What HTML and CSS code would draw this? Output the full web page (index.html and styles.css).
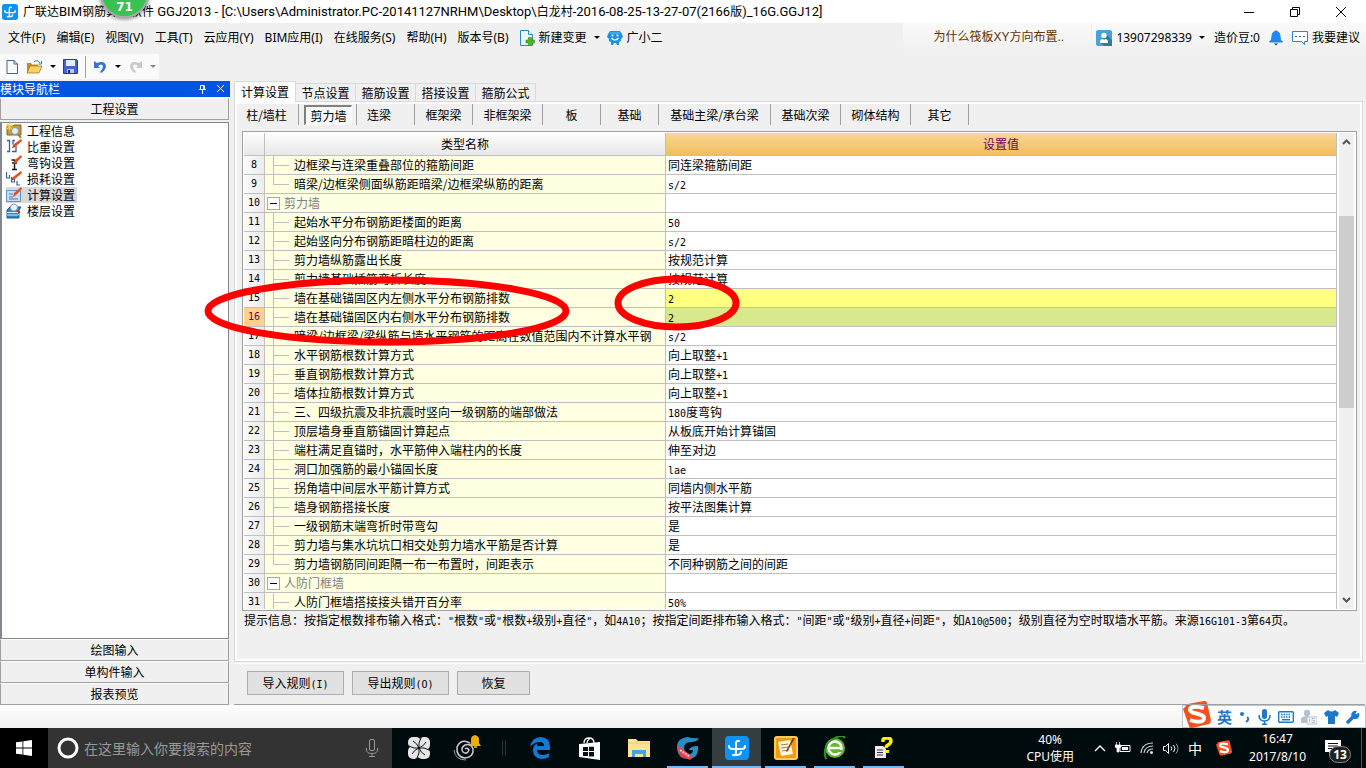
FILE: index.html
```html
<!DOCTYPE html>
<html lang="zh-CN">
<head>
<meta charset="utf-8">
<title>广联达BIM钢筋算量软件 GGJ2013</title>
<link rel="stylesheet" href="styles.css">
</head>
<body>
<header class="titlebar">
  <svg class="app-logo" width="16" height="16" viewBox="0 0 24 24"><rect width="24" height="24" rx="4" fill="#0c93f5"/><path d="M14 5q-3-1-3 3v8q0 4-3 3M4 10q0 3 4 3h9q3 0 3-3M11 19q5 0 5-3" fill="none" stroke="#fff" stroke-width="2" stroke-linecap="round"/></svg>
  <h1>广联达<span>BIM</span>钢筋算量软件<span> GGJ2013 - [C:\Users\Administrator.PC-20141127NRHM\Desktop\</span>白龙村<span>-2016-08-25-13-27-07(2166</span>版<span>)_16G.GGJ12]</span></h1>
  <div class="win-buttons">
    <button aria-label="最小化"><svg width="12" height="12"><path d="M1 6.5h10" stroke="#000"/></svg></button>
    <button aria-label="还原"><svg width="12" height="12" fill="none" stroke="#000"><path d="M1.500 3.500h7v7h-7zM3.500 3.500v-2h7v7h-2"/></svg></button>
    <button aria-label="关闭"><svg width="12" height="12"><path d="M1 1l10 10M11 1L1 11" stroke="#000"/></svg></button>
  </div>
  <div class="score">71</div>
</header>

<nav class="menubar">
  <button>文件(F)</button><button>编辑(E)</button><button>视图(V)</button><button>工具(T)</button><button>云应用(Y)</button><button>BIM应用(I)</button><button>在线服务(S)</button><button>帮助(H)</button><button>版本号(B)</button>
  <button class="with-icon"><svg width="15" height="16" viewBox="0 0 15 16"><path d="M.5.5h8l4 4v11H.5z" fill="#eaf6fd" stroke="#3287bd"/><path d="M8.500.5v4h4" fill="#fff" stroke="#3287bd"/><path d="M8.500 7.500h3v2.500h3v3h-3v3h-3v-3H6v-3h2.500z" fill="#57b51b" stroke="#378a0b" stroke-width=".6"/></svg>新建变更<i class="caret"></i></button>
  <button class="with-icon helper"><svg width="16" height="16" viewBox="0 0 16 16"><path d="M3 1h10l2 3 1 3-2 2v2l-2 1v3h-2l-1-2H7l-1 2H4v-3l-2-1V9L0 7l1-3z" fill="#1c92dc"/><path d="M3 2h10v2H3z" fill="#3cabee"/><path d="M4.500 8q3.500 4 7 0" fill="none" stroke="#fff" stroke-width="1.200"/><circle cx="5.500" cy="5.500" r="1" fill="#fff"/><circle cx="10.500" cy="5.500" r="1" fill="#fff"/></svg>广小二</button>
  <div class="notice"><a href="#">为什么筏板XY方向布置..</a></div>
  <div class="account">
    <button class="with-icon"><svg width="16" height="16" viewBox="0 0 16 16"><rect width="16" height="16" rx="2" fill="#4aa3d4"/><path d="M10 4l6 6v6H8l-4-4z" fill="#32789f"/><circle cx="8" cy="5.500" r="2.700" fill="#fff"/><path d="M4 12q0-3 3-3l1 1 1-1q3 0 3 3v1H4z" fill="#fff"/></svg>13907298339<i class="caret"></i></button>
    <span>造价豆:0</span>
    <button class="with-icon" aria-label="消息"><svg width="14" height="16" viewBox="0 0 14 16"><path d="M7 0v2M7 1.500C3.500 1.500 3 4 3 7q0 3-2.500 5h13Q11 10 11 7c0-3-.5-5.500-4-5.500z" fill="#1e88ee" stroke="#1e88ee"/><path d="M5 13.500h4L7 15.500z" fill="#103a6c"/></svg></button>
    <button class="with-icon"><svg width="16" height="16" viewBox="0 0 16 16"><path d="M.5 1.500h15v10h-3v3l-3-3h-9z" fill="#fff" stroke="#2b83dd"/><path d="M3 6.500h2m2 0h2m2 0h2" stroke="#2b5f9d"/></svg>我要建议</button>
  </div>
</nav>

<div class="toolbar"><div class="tools">
  <button aria-label="新建"><svg width="13" height="16" viewBox="0 0 13 16"><path d="M1 1.500h7l3.500 3.500v9.500H1z" fill="#f6fafe" stroke="#476488"/><path d="M8 1.500V5h3.500" fill="none" stroke="#476488"/></svg></button>
  <button aria-label="打开"><svg width="17" height="16" viewBox="0 0 17 16"><path d="M1 14V4h4l1 1.500h6V14z" fill="#c98b20"/><path d="M1 14l3-7h12l-3 7z" fill="#f8d168" stroke="#a36b14" stroke-width=".7"/><path d="M8 3q4-3 6 1m1.500-2v3h-3" fill="none" stroke="#3d72a6"/></svg></button>
  <i class="caret"></i>
  <button aria-label="保存"><svg width="15" height="15" viewBox="0 0 15 15"><path d="M.5.5h13l1 1v13H.5z" fill="#4663cf" stroke="#273b91"/><path d="M3 1h9v6H3z" fill="#e5edfb"/><path d="M4 10h7v4H4z" fill="#bac8ee"/><path d="M5 11h2v3H5z" fill="#1b2770"/></svg></button>
  <span class="divider"></span>
  <button aria-label="撤销"><svg width="15" height="14" viewBox="0 0 15 14"><path d="M1 1v7h6L5 6q4-3 5 0 0 3-3 6l1 1q5-3 5-7-1-6-9-3z" fill="#3673d3"/></svg></button>
  <i class="caret"></i>
  <button aria-label="重做" disabled><svg width="15" height="14" viewBox="0 0 15 14"><path d="M14 1v7H8l2-2Q6 3 5 6q0 3 3 6l-1 1q-5-3-5-7 1-6 9-3z" fill="#c9c9c9"/></svg></button>
  <i class="caret dim"></i>
</div></div>

<div class="workspace">
  <aside class="side">
    <div class="side-title"><span>模块导航栏</span>
      <button aria-label="固定"><svg width="9" height="10" fill="none" stroke="#fff"><path d="M2.500 5.500v-4h4v4M5.500 1v5M1 5.500h7M4.500 6v4"/></svg></button>
      <button aria-label="关闭"><svg width="9" height="10"><path d="M1 1l7 7M8 1L1 8" stroke="#fff"/></svg></button></div>
    <button class="group">工程设置</button>
    <ul class="modules">
      <li><a href="#"><svg width="16" height="16" viewBox="0 0 16 16"><path d="M1 3h6l1-1h7v10H1z" fill="#c29a45" stroke="#8a651a"/><path d="M0 3h7M3.500 0v7M1 1l5 5M6 1L1 6" stroke="#ffd429" stroke-width="1.200"/><circle cx="9" cy="8" r="3.500" fill="#e3f0fc" stroke="#7e9bbd"/><path d="M12 11l3 4" stroke="#a0742a" stroke-width="2"/></svg>工程信息</a></li>
      <li><a href="#"><svg width="16" height="16" viewBox="0 0 16 16"><path d="M1 1.500h2.500v11H1M9 1.500H7v4M6 12.500h4v-6" fill="none" stroke="#34619c" stroke-width="1.300"/><path d="M6 9l2-4 7-5 1 2-7 6z" fill="#ec4c22"/><path d="M6 9l2-4 1 3z" fill="#8a5a40"/></svg>比重设置</a></li>
      <li><a href="#"><svg width="16" height="16" viewBox="0 0 16 16"><path d="M5.500 5h3v10M6 8h5M6 14.500h5" fill="none" stroke="#1c1c1c" stroke-width="1.500"/><path d="M7 9l2-4 6-5 1 2-6 6z" fill="#ec4c22"/></svg>弯钩设置</a></li>
      <li><a href="#"><svg width="16" height="16" viewBox="0 0 16 16"><path d="M.5 1v6h3V4M5.500 6v5h3V8M11 10v4h3" fill="none" stroke="#34619c" stroke-width="1.200"/><path d="M5 10l2-4 8-6 1 2-7 6z" fill="#ec4c22"/><path d="M5 10l2-4 1 2z" fill="#8a5a40"/></svg>损耗设置</a></li>
      <li><a href="#" class="active"><svg width="16" height="16" viewBox="0 0 16 16"><path d="M.5 3.500h14v11H.5z" fill="#c8def8" stroke="#5f93ce"/><path d="M3 7h4m-4 3h4m-4 2h9" stroke="#5278a8"/><path d="M7 10l1-4 7-6 1 2-7 7z" fill="#ec4c22"/></svg>计算设置</a></li>
      <li><a href="#"><svg width="16" height="16" viewBox="0 0 16 16"><path d="M1 7l3-3h11l-2 3v8H1z" fill="#2e86ca" stroke="#135b99"/><path d="M1 9.500h11l2-2M1 12h11l2-2" stroke="#d6edfc" fill="none"/><circle cx="8" cy="4.500" r="3.500" fill="#e7f2fb" stroke="#8ea3b8"/><path d="M11 7l3 3" stroke="#7a5430" stroke-width="2"/></svg>楼层设置</a></li>
    </ul>
    <button class="group">绘图输入</button>
    <button class="group">单构件输入</button>
    <button class="group">报表预览</button>
  </aside>

  <main class="content">
    <div class="tabs" role="tablist">
      <button role="tab" class="current">计算设置</button><button role="tab">节点设置</button><button role="tab">箍筋设置</button><button role="tab">搭接设置</button><button role="tab">箍筋公式</button>
    </div>
    <section class="page">
      <div class="kinds">
        <button>柱/墙柱</button><button class="pressed"><span>剪力墙</span></button><button class="near">连梁</button><button>框架梁</button><button class="wide">非框架梁</button><button>板</button><button>基础</button><button class="widest">基础主梁/承台梁</button><button class="wide">基础次梁</button><button class="wide">砌体结构</button><button>其它</button>
      </div>
      <div class="grid-box">
        <div class="grid-view">
        <table class="grid">
          <colgroup><col class="c-num"><col class="c-name"><col></colgroup>
          <thead><tr><th></th><th>类型名称</th><th class="chosen">设置值</th></tr></thead>
          <tbody>
            <tr><th>8</th><td><div class="node"><i class="twig"></i>边框梁与连梁重叠部位的箍筋间距</div></td><td>同连梁箍筋间距</td></tr>
            <tr><th>9</th><td><div class="node"><i class="twig end"></i>暗梁/边框梁侧面纵筋距暗梁/边框梁纵筋的距离</div></td><td><span class="m">s/2</span></td></tr>
            <tr><th>10</th><td><div class="node parent"><button aria-label="折叠"></button>剪力墙</div></td><td></td></tr>
            <tr><th>11</th><td><div class="node"><i class="twig"></i>起始水平分布钢筋距楼面的距离</div></td><td><span class="m">50</span></td></tr>
            <tr><th>12</th><td><div class="node"><i class="twig"></i>起始竖向分布钢筋距暗柱边的距离</div></td><td><span class="m">s/2</span></td></tr>
            <tr><th>13</th><td><div class="node"><i class="twig"></i>剪力墙纵筋露出长度</div></td><td>按规范计算</td></tr>
            <tr><th>14</th><td><div class="node"><i class="twig"></i>剪力墙基础插筋弯折长度</div></td><td>按规范计算</td></tr>
            <tr><th>15</th><td><div class="node"><i class="twig"></i>墙在基础锚固区内左侧水平分布钢筋排数</div></td><td class="changed"><span class="m">2</span></td></tr>
            <tr><th class="chosen">16</th><td><div class="node"><i class="twig"></i>墙在基础锚固区内右侧水平分布钢筋排数</div></td><td class="focus"><span class="m">2</span></td></tr>
            <tr><th>17</th><td><div class="node"><i class="twig"></i>暗梁/边框梁/梁纵筋与墙水平钢筋的距离在数值范围内不计算水平钢</div></td><td><span class="m">s/2</span></td></tr>
            <tr><th>18</th><td><div class="node"><i class="twig"></i>水平钢筋根数计算方式</div></td><td>向上取整<span class="m">+1</span></td></tr>
            <tr><th>19</th><td><div class="node"><i class="twig"></i>垂直钢筋根数计算方式</div></td><td>向上取整<span class="m">+1</span></td></tr>
            <tr><th>20</th><td><div class="node"><i class="twig"></i>墙体拉筋根数计算方式</div></td><td>向上取整<span class="m">+1</span></td></tr>
            <tr><th>21</th><td><div class="node"><i class="twig"></i>三、四级抗震及非抗震时竖向一级钢筋的端部做法</div></td><td><span class="m">180</span>度弯钩</td></tr>
            <tr><th>22</th><td><div class="node"><i class="twig"></i>顶层墙身垂直筋锚固计算起点</div></td><td>从板底开始计算锚固</td></tr>
            <tr><th>23</th><td><div class="node"><i class="twig"></i>端柱满足直锚时，水平筋伸入端柱内的长度</div></td><td>伸至对边</td></tr>
            <tr><th>24</th><td><div class="node"><i class="twig"></i>洞口加强筋的最小锚固长度</div></td><td><span class="m">lae</span></td></tr>
            <tr><th>25</th><td><div class="node"><i class="twig"></i>拐角墙中间层水平筋计算方式</div></td><td>同墙内侧水平筋</td></tr>
            <tr><th>26</th><td><div class="node"><i class="twig"></i>墙身钢筋搭接长度</div></td><td>按平法图集计算</td></tr>
            <tr><th>27</th><td><div class="node"><i class="twig"></i>一级钢筋末端弯折时带弯勾</div></td><td>是</td></tr>
            <tr><th>28</th><td><div class="node"><i class="twig"></i>剪力墙与集水坑坑口相交处剪力墙水平筋是否计算</div></td><td>是</td></tr>
            <tr><th>29</th><td><div class="node"><i class="twig end"></i>剪力墙钢筋同间距隔一布一布置时，间距表示</div></td><td>不同种钢筋之间的间距</td></tr>
            <tr><th>30</th><td><div class="node parent"><button aria-label="折叠"></button>人防门框墙</div></td><td></td></tr>
            <tr><th>31</th><td><div class="node"><i class="twig"></i>人防门框墙搭接接头错开百分率</div></td><td><span class="m">50%</span></td></tr>
          </tbody>
        </table>
        </div>
        <div class="scroll">
          <button aria-label="向上"><svg width="9" height="6"><path d="M1 5l3.500-3.500L8 5" fill="none" stroke="#555" stroke-width="2"/></svg></button>
          <div class="before"></div><div class="thumb"></div><div class="after"></div>
          <button aria-label="向下"><svg width="9" height="6"><path d="M1 1l3.500 3.500L8 1" fill="none" stroke="#555" stroke-width="2"/></svg></button>
        </div>
      </div>
      <p class="hint">提示信息：按指定根数排布输入格式：<span class="m">"</span>根数<span class="m">"</span>或<span class="m">"</span>根数<span class="m">+</span>级别<span class="m">+</span>直径<span class="m">"</span>，如<span class="m">4A10</span>；按指定间距排布输入格式：<span class="m">"</span>间距<span class="m">"</span>或<span class="m">"</span>级别<span class="m">+</span>直径<span class="m">+</span>间距<span class="m">"</span>，如<span class="m">A10@500</span>；级别直径为空时取墙水平筋。来源<span class="m">16G101-3</span>第<span class="m">64</span>页。</p>
    </section>
    <footer class="actions">
      <button>导入规则<span class="m">(I)</span></button><button>导出规则<span class="m">(O)</span></button><button class="short">恢复</button>
    </footer>
  </main>
  <svg class="marks" width="760" height="360"><g fill="none" stroke="#f00" stroke-width="7"><ellipse cx="387" cy="230" rx="179" ry="31"/><ellipse cx="677" cy="222" rx="59" ry="24"/></g></svg>
</div>

<div class="status">
  <div class="ime">
    <svg class="sogou" width="28" height="27" viewBox="0 0 28 27"><path d="M3 5Q2 3 5 3l16-3q3 0 3 2l4 17q0 3-2 4L9 27q-3 0-3-2L0 8z" fill="#f4511e"/><path d="M21 7Q7 4 7 9c0 4 14 3 14 8s-9 4-14 2" fill="none" stroke="#fff" stroke-width="4"/></svg>
    <b>英</b>
    <svg width="12" height="16" viewBox="0 0 12 16"><circle cx="3" cy="5" r="2" fill="#1c78c8"/><path d="M8 8q3 2-1 5" fill="none" stroke="#1c78c8" stroke-width="2"/></svg>
    <svg width="13" height="16" viewBox="0 0 13 16"><rect x="4" y="0" width="5" height="10" rx="2.500" fill="#1c78c8"/><path d="M1 6q0 6 5.500 6T12 6M6.500 12v4M4 15.200h5" fill="none" stroke="#1c78c8" stroke-width="1.500"/></svg>
    <svg width="16" height="12" viewBox="0 0 16 12"><rect x=".7" y=".7" width="14.600" height="10.600" rx="1" fill="#fff" stroke="#1c78c8" stroke-width="1.400"/><path d="M3 3.500h10M3 6h10" stroke="#1c78c8" stroke-width="1.500" stroke-dasharray="1.500 1"/><path d="M4 8.700h8" stroke="#1c78c8" stroke-width="1.500"/></svg>
    <svg width="16" height="16" viewBox="0 0 16 16"><circle cx="6" cy="4" r="3.200" fill="#b5c0d0"/><path d="M0 14V9q6-4 11 0v5z" fill="#b5c0d0"/><rect x="6" y="8" width="10" height="7" fill="#fff" stroke="#b5c0d0"/><path d="M8.500 9.500v4m5.500-4h-3v4h3v-2h-2" fill="none" stroke="#b5c0d0"/></svg>
    <svg width="15" height="14" viewBox="0 0 15 14"><path d="M4 0q3.500 3 7 0l4 3-2 4-2-1v8H4V6L2 7 0 3z" fill="#1c78c8"/></svg>
    <svg width="14" height="14" viewBox="0 0 14 14"><path d="M2 12l6-6" stroke="#1c78c8" stroke-width="3.500" stroke-linecap="round"/><path d="M12.500 3.500A3.500 3.500 0 1 1 10 1.500L8.800 3.800l1.500 1.500z" fill="#1c78c8" stroke="#1c78c8" stroke-width="1.200"/></svg>
  </div>
</div>

<div class="taskbar">
  <button class="start" aria-label="开始"><svg width="16" height="16" viewBox="0 0 16 16" fill="#fff"><path d="M0 2.300L6.500 1.400v6.200H0zM7.300 1.300L16 0v7.600H7.300zM0 8.400h6.500v6.200L0 13.700zM7.300 8.400H16V16l-8.700-1.300z"/></svg></button>
  <label class="search"><svg width="22" height="22"><circle cx="11" cy="11" r="9" fill="none" stroke="#fff" stroke-width="3"/></svg><input type="text" aria-label="搜索" placeholder="在这里输入你要搜索的内容"><svg width="12" height="18" viewBox="0 0 12 18" fill="none" stroke="#999"><rect x="3.500" y=".5" width="5" height="11" rx="1.500"/><path d="M.5 9v2q0 3.500 5.500 3.500t5.500-3.500V9M6 14.500v3M3 17.500h6"/></svg></label>
  <div class="apps">
    <button aria-label="应用"><svg width="22" height="22" viewBox="0 0 22 22"><rect x="0" y="0" width="13" height="11" rx="5" fill="#e6e6e6"/><rect x="11" y="0" width="11" height="13" rx="5" fill="#e6e6e6"/><rect x="9" y="11" width="13" height="11" rx="5" fill="#e6e6e6"/><rect x="0" y="9" width="11" height="13" rx="5" fill="#e6e6e6"/><path d="M11 11Q6 12 1 9M11 11q-1-5 2-10M11 11q5-1 10 2M11 11q1 5-2 10M11 11Q9 6 5 4M11 11q5-2 7-6M11 11q2 5 6 7M11 11q-5 2-7 6" fill="none" stroke="#101416"/></svg></button>
    <button aria-label="提醒"><svg width="30" height="28" viewBox="0 0 30 28"><path d="M17 9Q8 4 4 13q-1 10 8 11 9-1 8-9-2-6-8-4-5 3-2 7 4 3 6-2-2-3-4-1" fill="none" stroke="#ccc" stroke-width="1.500"/><path d="M1 16q1 10 12 10" fill="none" stroke="#999"/><path d="M16 12l2-3V5q0-3 4-4 4 1 4 4v4l2 3z" fill="#eaae08"/><path d="M21 12h3v2h-3z" fill="#d29300"/></svg></button>
    <span class="split"></span>
    <button aria-label="Edge"><svg width="21" height="22" viewBox="0 0 21 22"><path d="M0 10Q2 0 11 0q9 1 9 9v4H7q0 5 6 5 4 0 6-2v4q-3 2-8 2-8-1-8-9 0-5 5-7-1 1-1 3h7q0-4-4-4-6 0-10 5z" fill="#0f7ad8"/></svg></button>
    <button aria-label="应用商店"><svg width="22" height="23" viewBox="0 0 22 23"><path d="M0 7l21-2v18L0 20z" fill="#fff"/><path d="M5 6q0-5 5-5 5 0 5 5M8 6q0-3 4-5" fill="none" stroke="#fff" stroke-width="1.300"/><path d="M4 10h5v4H4zM10 9.700h5V14h-5zM4 15h5v4H4zM10 15h5v4.500h-5z" fill="#06101a"/></svg></button>
    <button aria-label="文件资源管理器"><svg width="22" height="19" viewBox="0 0 22 19"><path d="M0 0h8l2 2h12v16H0z" fill="#ffe394"/><path d="M0 4h22" stroke="#efc862"/><path d="M4 18v-7h14v7h-3v-3H7v3z" fill="#3aa9df"/></svg></button>
    <button class="open" aria-label="广联达G"><svg width="24" height="24" viewBox="0 0 24 24"><path d="M1 13Q0 2 12 1q5 2 11 1-2 4-8 4-7 0-7 6 1 6 6 6 3-1 3-4h-4q1-4 9-4 1 12-9 13Q2 23 1 13z" fill="#278fc5"/><path d="M1 9l16 12-3 3-10-4z" fill="#ef3c4a"/><path d="M4 14l10 7" stroke="#ffd0d4" stroke-width="2" stroke-dasharray="2 1"/></svg></button>
    <button class="open front" aria-label="GGJ2013"><svg width="24" height="24" viewBox="0 0 24 24"><rect width="24" height="24" rx="4" fill="#0c93f5"/><path d="M14 5q-3-1-3 3v8q0 4-3 3M4 10q0 3 4 3h9q3 0 3-3M11 19q5 0 5-3" fill="none" stroke="#fff" stroke-width="2" stroke-linecap="round"/></svg></button>
    <button class="open" aria-label="写字板"><svg width="24" height="24" viewBox="0 0 24 24"><rect x="1" y="1" width="22" height="22" rx="2" fill="#f39a13" stroke="#ffcb55" stroke-width="2"/><path d="M4 6l12-2 3 14-12 2z" fill="#fff7df"/><path d="M7 9l7-1M7 12l8-1M8 15l7-1" stroke="#9f7d54"/><path d="M21 2l-8 14-1-1L19 2z" fill="#7c3a0c"/></svg></button>
    <button class="open" aria-label="浏览器"><svg width="24" height="24" viewBox="0 0 24 24"><circle cx="12" cy="12" r="10" fill="#61b82b"/><path d="M3 23Q-1 11 9 4t13-2" fill="none" stroke="#2b941e" stroke-width="2"/><circle cx="12" cy="12" r="6.500" fill="none" stroke="#fff" stroke-width="2.500"/><path d="M7 12h12" stroke="#fff" stroke-width="2.500"/><path d="M14 15h6" stroke="#61b82b" stroke-width="2"/></svg></button>
    <button class="open" aria-label="帮助"><svg width="20" height="22" viewBox="0 0 20 22"><path d="M1 9h8l3 3v9H1z" fill="#eee"/><path d="M3 13h6M3 15.500h6M3 18h6" stroke="#333"/><path d="M9 5V3q0-2 4-2t4 3q0 2-3 4-2 1-2 3" fill="none" stroke="#ffee00" stroke-width="3.500"/><path d="M11 13h4v3h-4z" fill="#ffee00"/></svg></button>
  </div>
  <div class="tray">
    <div class="cpu">40%<br>CPU使用</div>
    <svg width="12" height="8"><path d="M1 7l5-5 5 5" fill="none" stroke="#fff" stroke-width="1.300"/></svg>
    <svg width="16" height="12" viewBox="0 0 16 12"><path d="M5 3.500h10v6H5z" fill="none" stroke="#fff"/><path d="M7 5h6v3H7z" fill="#fff"/><path d="M1.500 0v3M4.500 0v3M0 3h6v2L4 6v4H2V6L0 5z" fill="#fff" stroke="#fff" stroke-width=".7"/></svg>
    <svg width="14" height="14" viewBox="0 0 14 14" fill="none" stroke="#ccc" stroke-width="1.200"><path d="M1 12Q2 2 13 2M4 12q1-7 9-7M7 12q1-4 6-4"/><circle cx="11.500" cy="11.500" r="1" fill="#fff"/></svg>
    <svg width="16" height="13" viewBox="0 0 16 13" fill="none" stroke="#fff"><path d="M.5 4.500h2l3-3v10l-3-3h-2zM8 4.500q1.500 2 0 4M10.500 3q3 3.500 0 7"/><path d="M13 1.500q4 5 0 10" stroke="#999"/></svg>
    <span class="lang">中</span>
    <svg width="16" height="16" viewBox="0 0 28 27"><path d="M3 5Q2 3 5 3l16-3q3 0 3 2l4 17q0 3-2 4L9 27q-3 0-3-2L0 8z" fill="#f4511e"/><path d="M21 7Q7 4 7 9c0 4 14 3 14 8s-9 4-14 2" fill="none" stroke="#fff" stroke-width="4"/></svg>
    <div class="clock">16:47<br>2017/8/10</div>
    <button class="notes" aria-label="通知"><svg width="17" height="16" viewBox="0 0 17 16"><path d="M0 0h16v12H8l-4 4v-4H0z" fill="#fff"/><path d="M3 3.500h10M3 6h10M3 8.500h6" stroke="#111"/></svg><span>13</span></button>
  </div>
</div>
</body>
</html>
```
FILE: styles.css
```css
* { box-sizing: border-box; }
body { margin: 0; height: 100vh; display: flex; flex-direction: column; overflow: hidden; background: #f0f0f0; color: #000; font: 12px/18px "Noto Sans CJK SC", sans-serif; }
button { margin: 0; padding: 0; border: 0; background: none; color: inherit; font: inherit; white-space: nowrap; }
a { color: inherit; text-decoration: none; }
svg { display: block; flex: none; }
.m { font-family: "DejaVu Sans Mono", monospace; font-size: 10px; line-height: 1; }
.caret { width: 0; height: 0; border: 3px solid transparent; border-top-color: #000; border-bottom: 0; }
.dim { border-top-color: #888; }

.titlebar { position: relative; flex: none; height: 23px; display: flex; align-items: center; padding-left: 2px; background: #fff; }
.titlebar h1 { flex: 1; margin: 0 0 0 5px; font: 12px/22px "Noto Sans CJK SC", sans-serif; white-space: nowrap; }
.titlebar h1 span { font-family: Roboto, sans-serif; font-size: 13px; }
.win-buttons { display: flex; margin-right: 2px; }
.win-buttons button { width: 46px; display: flex; justify-content: center; }
.score { position: absolute; left: 100px; top: -31px; width: 49px; height: 49px; border: 2px solid #a5adb0; border-radius: 50%; background: #39c151; box-shadow: 0 1px 5px #0008; color: #fff; font: bold 12px/22px "DejaVu Sans", sans-serif; text-align: center; padding-top: 25px; z-index: 2; }

.menubar { flex: none; height: 29px; display: flex; align-items: center; gap: 11px; padding-left: 8px; font-family: "Noto Sans", "Noto Sans CJK SC", sans-serif; white-space: nowrap; }
.with-icon { display: flex; align-items: center; gap: 4px; }
.with-icon .caret { margin-left: 3px; }
.helper { margin-left: -4px; }
.notice { margin-left: auto; width: 188px; height: 29px; line-height: 29px; padding-left: 30px; background: linear-gradient(#fafafa, #f0f0f0); color: #643200; font-family: "Liberation Sans", "Noto Sans CJK SC", sans-serif; }
.account { display: flex; align-items: center; gap: 9px; height: 29px; margin-left: -10px; padding: 0 6px 0 4px; background: linear-gradient(#fafafa, #f0f0f0); }

.toolbar { flex: none; height: 29px; padding: 2px 0; }
.tools { width: 159px; height: 25px; display: flex; align-items: center; gap: 7px; padding-left: 6px; background: #fafafa; }
.divider { width: 1px; height: 22px; background: #a0a0a0; }

.workspace { position: relative; flex: 1; min-height: 0; display: flex; gap: 4px; }
.marks { position: absolute; left: 0; top: 0; pointer-events: none; }
.side { flex: none; width: 230px; display: flex; flex-direction: column; }
.side-title { height: 16px; display: flex; align-items: center; gap: 9px; padding-right: 5px; margin-bottom: 1px; background: #0054e3; color: #fff; line-height: 14px; }
.side-title span { flex: 1; }
.group { height: 22px; margin-right: 1px; border: 1px solid #a0a0a0; border-top-color: #fff; line-height: 20px; }
.modules { flex: 1; margin: 2px 1px 0 0; padding: 0 0 0 4px; border: 1px solid #828790; border-width: 1px 1px 1px 2px; background: #fff; list-style: none; }
.modules a { width: max-content; height: 16px; display: flex; align-items: center; gap: 5px; padding: 0 2px 0 0; line-height: 16px; }
.modules a.active { background: #d9d9d9; }

.content { flex: 1; min-width: 0; display: flex; flex-direction: column; }
.tabs { height: 20px; display: flex; align-items: flex-end; }
.tabs button { width: 60px; height: 18px; border: 1px solid #d9d9d9; border-width: 1px 1px 0 0; line-height: 16px; }
.tabs .current { width: 62px; height: 21px; margin-bottom: -1px; border-left-width: 1px; background: #fff; line-height: 18px; z-index: 1; }
.page { flex: 1; min-height: 0; margin-right: 3px; display: flex; flex-direction: column; border: 1px solid #d9d9d9; outline: 2px solid #fff; outline-offset: -3px; padding: 2px 5px 2px 7px; }
.kinds { flex: none; height: 21px; display: flex; margin-left: -3px; }
.kinds button { width: 58px; border-right: 1px solid #a0a0a0; line-height: 18px; }
.kinds button:first-child { width: 60px; padding-right: 4px; }
.kinds .wide { width: 70px; }
.kinds .widest { width: 112px; }
.kinds .near { padding-right: 13px; }
.kinds .pressed { padding: 0 4px 0 5px; }
.pressed span { display: block; height: 20px; border: 1px solid #fff; border-width: 2px 1px 1px 2px; border-top-color: #808080; border-left-color: #808080; background: #f8f8f8; line-height: 17px; }
.grid-box { flex: 1; min-height: 0; margin-top: 6px; display: flex; border: 1px solid #a0a0a0; padding: 1px; background: #fff; }
.grid-view { flex: 1; min-width: 0; overflow: hidden; }
.grid { width: 100%; table-layout: fixed; border-collapse: separate; border-spacing: 0; }
.c-num { width: 21px; }
.c-name { width: 401px; }
.grid th, .grid td { height: 19px; padding: 0; border: 1px solid #c0c0c0; border-width: 0 1px 1px 0; font-weight: normal; line-height: 16px; white-space: nowrap; overflow: hidden; }
.grid th { background: linear-gradient(#fdfdfd, #e8e8e8); }
.grid tbody th { background: linear-gradient(90deg, #fafafa, #ececec); font: 10px/16px "DejaVu Sans Mono", monospace; }
.grid thead th { height: 23px; }
.grid thead .chosen { background: linear-gradient(#f9d698, #f1be5d); color: #700060; }
.grid tbody .chosen { background: #ffd18a; color: #700060; }
.grid td:nth-child(2) { background: #ffffe1; }
.grid td:nth-child(3) { padding: 0 0 1px 2px; }
.grid .changed { background: #ffff80; }
.grid .focus { background: #d8e98b; }
.node { height: 18px; display: flex; align-items: center; gap: 5px; padding-left: 8px; line-height: 18px; }
.twig { flex: none; width: 16px; height: 18px; background: linear-gradient(#c0c0c0, #c0c0c0) 0 0 / 1px 18px no-repeat, linear-gradient(#c0c0c0, #c0c0c0) 0 9px / 16px 1px no-repeat; }
.twig.end { background-size: 1px 9px, 16px 1px; }
.parent { padding-left: 2px; gap: 4px; color: #808080; }
.parent button { width: 13px; height: 13px; border: 1px solid #a8a8a8; background: linear-gradient(#000, #000) 2px 5px / 7px 1px no-repeat #fff; }
.scroll { width: 18px; display: flex; flex-direction: column; border: solid #fff; border-width: 0 1px 0 2px; background: #f0f0f0; }
.scroll button { height: 17px; display: flex; align-items: center; justify-content: center; }
.before { flex: 66; }
.thumb { flex: 193; background: #cdcdcd; }
.after { flex: 184; }
.hint { flex: none; height: 48px; margin: 0; padding-left: 2px; white-space: nowrap; }
.actions { flex: none; height: 42px; margin: 1px 1px 0 0; display: flex; gap: 8px; padding: 7px 0 0 13px; border-top: 1px solid #fff; border-bottom: 1px solid #a0a0a0; }
.actions button { width: 97px; height: 24px; border: 1px solid #adadad; background: #e1e1e1; }
.actions .short { width: 73px; }

.status { flex: none; height: 23px; display: flex; justify-content: flex-end; background: linear-gradient(#fff, #f0f0f0); }
.ime { display: flex; align-items: center; gap: 7px; height: 23px; padding-right: 5px; border: 1px solid #b8c8da; background: #fff; color: #1c78c8; font-size: 15px; }
.ime .sogou { margin: -4px -1px 0 0; }

.taskbar { flex: none; height: 40px; display: flex; background: #000b0e; color: #fff; }
.start { width: 48px; display: flex; align-items: center; justify-content: center; background: #000; }
.search { width: 344px; display: flex; align-items: center; padding: 0 14px 0 9px; gap: 5px; background: #333; }
.search input { flex: 1; min-width: 0; padding: 0; border: 0; background: none; color: #fff; font: 14px "Noto Sans CJK SC", sans-serif; }
.search input::placeholder { color: #999; }
.apps { display: flex; margin-left: 2px; }
.apps button { width: 49px; display: flex; align-items: center; justify-content: center; }
.split { width: 4px; height: 16px; margin: 12px 10px; border: 1px solid #333; border-width: 0 1px; }
.apps .open { width: 41px; margin: 0 4px; border-bottom: 2px solid #76b9ed; padding-top: 2px; }
.apps .front { width: 49px; margin: 0; background: #343d40; }
.tray { margin-left: auto; display: flex; align-items: center; gap: 9px; font: 12px/17px "Noto Sans", "Noto Sans CJK SC", sans-serif; }
.cpu, .clock { text-align: center; }
.cpu { margin-right: 11px; }
.lang { margin-right: 5px; font-size: 14px; }
.tray .clock { margin: 0 -3px 0 8px; line-height: 18px; }
.notes { position: relative; width: 50px; height: 40px; padding-left: 13px; border-right: 1px solid #555; margin-right: 4px; display: flex; align-items: center; }
.notes span { position: absolute; left: 17px; top: 18px; width: 22px; height: 17px; border: 1px solid #888; border-radius: 9px; background: #222; font-weight: bold; line-height: 15px; }
```
